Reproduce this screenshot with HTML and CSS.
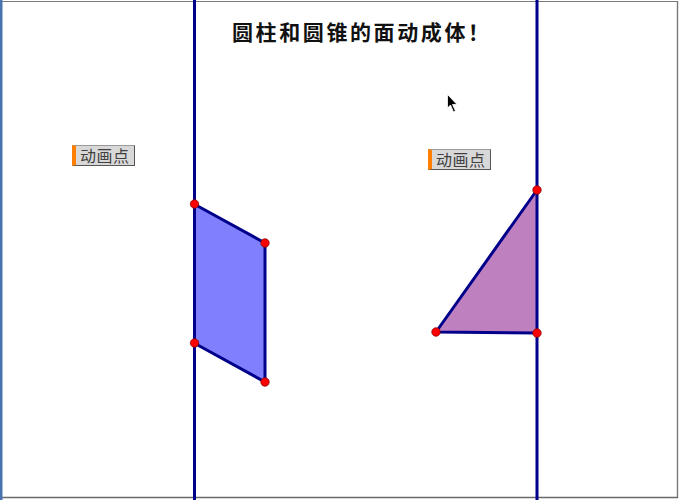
FILE: index.html
```html
<!DOCTYPE html>
<html>
<head>
<meta charset="utf-8">
<link rel="stylesheet" href="styles.css">
</head>
<body>
<div class="stage">
  <svg class="canvas" width="680" height="500" viewBox="0 0 680 500">
    <rect x="0" y="0" width="680" height="500" fill="#ffffff"/>
    <line x1="0" y1="1.5" x2="678" y2="1.5" stroke="#7a7a7a" stroke-width="1.2"/>
    <line x1="677.5" y1="1" x2="677.5" y2="498" stroke="#7a7a7a" stroke-width="1.4"/>
    <line x1="0" y1="497.5" x2="678" y2="497.5" stroke="#6a6a6a" stroke-width="1.4"/>
    <rect x="0" y="0" width="2.5" height="500" fill="#4a74b0"/>
    <polygon points="194,204 265,243 265,382 194,343" fill="#8080ff"/>
    <polygon points="537,190 537,333 436,332" fill="#bf80bf"/>
    <g stroke="#00008b" stroke-width="3" fill="none" stroke-linejoin="round">
      <line x1="194.5" y1="0" x2="194.5" y2="500"/>
      <line x1="537" y1="0" x2="537" y2="500"/>
      <polyline points="194,204 265,243 265,382 194,343"/>
      <polyline points="537,190 436,332 537,333"/>
    </g>
    <g fill="#ff0000" stroke="#8b0000" stroke-width="0.8">
      <circle cx="194.5" cy="204" r="4.2"/>
      <circle cx="265" cy="243" r="4.2"/>
      <circle cx="265" cy="382" r="4.2"/>
      <circle cx="194.5" cy="343" r="4.2"/>
      <circle cx="537" cy="190" r="4.2"/>
      <circle cx="537" cy="333" r="4.2"/>
      <circle cx="436" cy="332" r="4.2"/>
    </g>
    <path d="M447.5 94.5 L447.5 108 L450.5 105 L453.5 112 L455.5 111 L452.5 104.5 L457 104.5 Z" fill="#000" stroke="#fff" stroke-width="0.8"/>
  </svg>
  <h1 class="title">圆柱和圆锥的面动成体！</h1>
  <button class="anim-btn btn-left">动画点</button>
  <button class="anim-btn btn-right">动画点</button>
</div>
</body>
</html>
```
FILE: styles.css
```css
html, body {
  margin: 0;
  padding: 0;
  background: #ffffff;
}
.stage {
  position: relative;
  width: 680px;
  height: 500px;
  overflow: hidden;
  font-family: "Noto Sans CJK SC", "Liberation Sans", sans-serif;
}
.canvas {
  display: block;
}
.title {
  position: absolute;
  left: 232px;
  top: 17px;
  margin: 0;
  font-size: 21px;
  font-weight: bold;
  line-height: 28px;
  color: #111111;
  letter-spacing: 2.6px;
  white-space: nowrap;
}
.anim-btn {
  position: absolute;
  box-sizing: border-box;
  width: 63px;
  height: 21px;
  margin: 0;
  padding: 0 0 0 4px;
  background: #d8d8d8;
  border: 1px solid #555555;
  border-left: 4px solid #ff8000;
  border-top-color: #9a9a9a;
  font-family: "Noto Sans CJK SC", sans-serif;
  font-size: 16px;
  line-height: 19px;
  color: #404040;
  text-align: left;
  letter-spacing: 0.5px;
  white-space: nowrap;
}
.btn-left {
  left: 72px;
  top: 145px;
}
.btn-right {
  left: 428px;
  top: 149px;
}
```
